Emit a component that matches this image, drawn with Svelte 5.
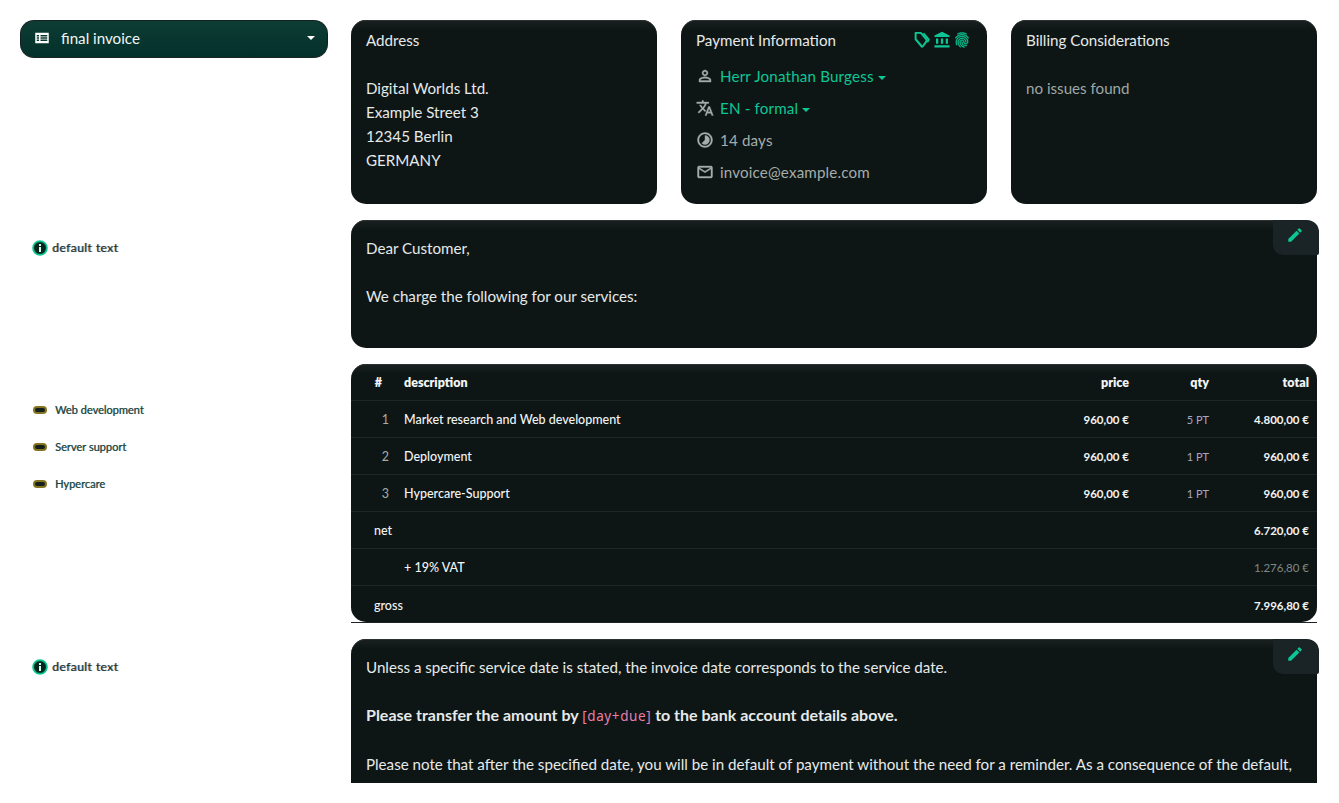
<script>
	const rows = [
		{ n: 1, label: 'Market research and Web development', price: '960,00 €', qty: '5 PT', total: '4.800,00 €' },
		{ n: 2, label: 'Deployment', price: '960,00 €', qty: '1 PT', total: '960,00 €' },
		{ n: 3, label: 'Hypercare-Support', price: '960,00 €', qty: '1 PT', total: '960,00 €' }
	]
	const sections = ['Web development', 'Server support', 'Hypercare']
	const pencil = 'M3 17.25V21h3.75L17.81 9.94l-3.75-3.75L3 17.25zM20.71 7.04a1 1 0 000-1.41l-2.34-2.34a1 1 0 00-1.41 0l-1.83 1.83 3.75 3.75 1.83-1.83z'
</script>

<div class="page">
	<div class="row">
		<aside class="side">
			<button class="doctype">
				<svg viewBox="0 0 24 24" width="18" height="18"><path fill="#fff" fill-rule="evenodd" d="M3 5h18v14H3z M5 8v2h3V8z M10 8v2h9V8z M5 11v2h3v-2z M10 11v2h9v-2z M5 14v2h3v-2z M10 14v2h9v-2z" /></svg>
				<span>final invoice</span>
				<i class="caret white"></i>
			</button>
		</aside>
		<div class="cards">
			<section class="card info">
				<div>Address</div>
				<div class="address">
					Digital Worlds Ltd.<br />Example Street 3<br />12345 Berlin<br />GERMANY
				</div>
			</section>
			<section class="card info">
				<div class="card-head">
					<span>Payment Information</span>
					<span class="head-icons">
						<svg viewBox="0 0 24 24" width="18" height="18" fill="none" stroke="#0cc795" stroke-width="2.6" stroke-linejoin="round"><path d="M3.500 2.500h7l7.500 9v2L13.500 20 12 21 3.500 11z" /><path d="M14 3l7 8.500-2 3.500" /></svg>
						<svg viewBox="0 0 24 24" width="18" height="18" fill="#0cc795"><path d="M4 10h3v7H4zm6.500 0h3v7h-3zM2 19h20v3H2zm15-9h3v7h-3zm-5-9L2 6v2h20V6z" /></svg>
						<svg viewBox="0 0 24 24" width="18" height="18" fill="#0cc795" stroke="#0cc795" stroke-width="0.6"><path d="M17.810 4.470c-.08 0-.16-.02-.23-.06C15.660 3.420 14 3 12.010 3c-1.980 0-3.860.47-5.570 1.410-.24.13-.54.04-.68-.2-.13-.24-.04-.55.2-.68C7.820 2.520 9.860 2 12.010 2c2.130 0 3.990.47 6.030 1.520.25.13.34.43.21.67-.09.18-.26.28-.44.28zM3.500 9.720c-.1 0-.2-.03-.29-.09-.23-.16-.28-.47-.12-.7.99-1.400 2.250-2.500 3.750-3.270C9.980 4.040 14 4.030 17.150 5.650c1.500.77 2.760 1.860 3.750 3.250.16.22.11.54-.12.7-.23.16-.54.11-.7-.12-.9-1.260-2.040-2.250-3.390-2.940-2.870-1.470-6.540-1.470-9.400.01-1.360.7-2.500 1.700-3.400 2.960-.08.14-.23.21-.39.21zm6.250 12.070c-.13 0-.26-.05-.35-.15-.87-.87-1.340-1.430-2.010-2.640-.69-1.230-1.050-2.730-1.050-4.340 0-2.970 2.540-5.390 5.660-5.390s5.660 2.420 5.660 5.390c0 .28-.22.5-.5.5s-.5-.22-.5-.5c0-2.420-2.090-4.390-4.660-4.390-2.570 0-4.660 1.970-4.660 4.390 0 1.440.32 2.770.93 3.850.64 1.150 1.080 1.640 1.850 2.420.19.2.19.51 0 .71-.11.1-.24.15-.37.15zm7.170-1.850c-1.190 0-2.240-.3-3.100-.89-1.490-1.010-2.380-2.650-2.380-4.390 0-.28.22-.5.5-.5s.5.22.5.5c0 1.410.72 2.740 1.940 3.560.71.48 1.540.71 2.540.71.24 0 .64-.03 1.040-.1.27-.05.53.13.58.41.05.27-.13.53-.41.58-.57.11-1.070.12-1.210.12zM14.910 22c-.04 0-.09-.01-.13-.02-1.590-.44-2.630-1.030-3.720-2.100-1.400-1.390-2.170-3.240-2.170-5.220 0-1.620 1.380-2.940 3.080-2.940 1.700 0 3.080 1.320 3.080 2.940 0 1.070.93 1.940 2.080 1.940s2.080-.87 2.080-1.940c0-3.770-3.250-6.830-7.250-6.830-2.840 0-5.440 1.580-6.610 4.030-.39.81-.59 1.760-.59 2.800 0 .78.07 2.010.67 3.610.1.26-.03.55-.29.64-.26.1-.55-.04-.64-.29-.49-1.310-.73-2.610-.73-3.960 0-1.200.23-2.290.68-3.240 1.330-2.790 4.280-4.600 7.510-4.600 4.550 0 8.250 3.510 8.250 7.830 0 1.620-1.380 2.940-3.080 2.940s-3.080-1.320-3.080-2.940c0-1.070-.93-1.940-2.080-1.940s-2.080.87-2.080 1.940c0 1.710.66 3.310 1.870 4.510.95.94 1.860 1.460 3.270 1.850.27.07.42.35.35.61-.05.23-.26.38-.47.38z" /></svg>
					</span>
				</div>
				<ul class="facts">
					<li>
						<svg viewBox="0 0 24 24" width="18" height="18"><path d="M12 5.900a2.100 2.100 0 110 4.200 2.100 2.100 0 010-4.200m0 9c2.970 0 6.100 1.460 6.100 2.100v1.100H5.900V17c0-.64 3.130-2.100 6.100-2.100M12 4C9.790 4 8 5.790 8 8s1.790 4 4 4 4-1.790 4-4-1.790-4-4-4zm0 9c-2.670 0-8 1.340-8 4v3h16v-3c0-2.660-5.330-4-8-4z" /></svg>
						<span class="link">Herr Jonathan Burgess<i class="caret"></i></span>
					</li>
					<li>
						<svg viewBox="0 0 24 24" width="18" height="18"><path d="M12.870 15.070l-2.540-2.510.03-.03A17.500 17.500 0 0014.070 6H17V4h-7V2H8v2H1v2h11.170C11.500 7.920 10.440 9.750 9 11.350 8.070 10.320 7.300 9.190 6.690 8h-2c.73 1.630 1.730 3.170 2.980 4.560l-5.090 5.020L4 19l5-5 3.110 3.110.76-2.040zM18.500 10h-2L12 22h2l1.120-3h4.750L21 22h2l-4.500-12zm-2.620 7l1.620-4.330L19.120 17h-3.240z" /></svg>
						<span class="link">EN - formal<i class="caret"></i></span>
					</li>
					<li>
						<svg viewBox="0 0 24 24" width="18" height="18"><path d="M16.240 7.760C15.070 6.590 13.540 6 12 6v6l-4.240 4.240c2.340 2.340 6.140 2.340 8.490 0 2.340-2.340 2.340-6.140-.01-8.480zM12 2C6.480 2 2 6.480 2 12s4.480 10 10 10 10-4.480 10-10S17.520 2 12 2zm0 18c-4.420 0-8-3.580-8-8s3.580-8 8-8 8 3.580 8 8-3.580 8-8 8z" /></svg>
						<span>14 days</span>
					</li>
					<li>
						<svg viewBox="0 0 24 24" width="18" height="18"><path d="M22 6c0-1.100-.9-2-2-2H4c-1.100 0-2 .9-2 2v12c0 1.100.9 2 2 2h16c1.100 0 2-.9 2-2V6zm-2 0l-8 5-8-5h16zm0 12H4V8l8 5 8-5v10z" /></svg>
						<span>invoice@example.com</span>
					</li>
				</ul>
			</section>
			<section class="card info">
				<div>Billing Considerations</div>
				<div class="address muted">no issues found</div>
			</section>
		</div>
	</div>

	<div class="row">
		<aside class="side">
			<div class="note">
				<svg viewBox="0 0 16 16" width="16" height="16"><circle cx="8" cy="8" r="7" fill="#063" stroke="#0cc795" stroke-width="1.6" /><circle cx="8" cy="8" r="5.5" fill="#08221d" /><path fill="#cfe" d="M7 7h2v5H7z M7 4h2v2H7z" /></svg>
				<span>default text</span>
			</div>
		</aside>
		<section class="card text short">
			<button class="edit" aria-label="edit">
				<svg viewBox="0 0 24 24" width="18" height="18"><path fill="#0cc795" d={pencil} /></svg>
			</button>
			<p>Dear Customer,</p>
			<p>We charge the following for our services:</p>
		</section>
	</div>

	<div class="row">
		<aside class="side">
			<ul class="sections">
				{#each sections as name}
					<li>
						<i class="pill"></i>
						<span>{name}</span>
					</li>
				{/each}
			</ul>
		</aside>
		<div class="table-wrap">
			<section class="card table">
				<div class="tr head">
					<span class="num">#</span>
					<span class="desc">description</span>
					<span class="price">price</span>
					<span class="qty">qty</span>
					<span class="total">total</span>
				</div>
				{#each rows as row}
					<div class="tr">
						<span class="num index">{row.n}</span>
						<span class="desc">{row.label}</span>
						<span class="price amount">{row.price}</span>
						<span class="qty unit">{row.qty}</span>
						<span class="total amount">{row.total}</span>
					</div>
				{/each}
				<div class="tr">
					<span class="sum">net</span>
					<span class="total amount">6.720,00 €</span>
				</div>
				<div class="tr">
					<span class="sum vat">+ 19% VAT</span>
					<span class="total amount dim">1.276,80 €</span>
				</div>
				<div class="tr">
					<span class="sum">gross</span>
					<span class="total amount">7.996,80 €</span>
				</div>
			</section>
		</div>
	</div>

	<div class="row">
		<aside class="side">
			<div class="note">
				<svg viewBox="0 0 16 16" width="16" height="16"><circle cx="8" cy="8" r="7" fill="#063" stroke="#0cc795" stroke-width="1.6" /><circle cx="8" cy="8" r="5.5" fill="#08221d" /><path fill="#cfe" d="M7 7h2v5H7z M7 4h2v2H7z" /></svg>
				<span>default text</span>
			</div>
		</aside>
		<section class="card text">
			<button class="edit" aria-label="edit">
				<svg viewBox="0 0 24 24" width="18" height="18"><path fill="#0cc795" d={pencil} /></svg>
			</button>
			<p>Unless a specific service date is stated, the invoice date corresponds to the service date.</p>
			<p><b>Please transfer the amount by <span class="token">[day+due]</span> to the bank account details above.</b></p>
			<p>Please note that after the specified date, you will be in default of payment without the need for a reminder. As a consequence of the default,<br />you are liable for any interest on arrears and reminder fees, including legal costs. This may also be passed on to third parties for collection.</p>
		</section>
	</div>
</div>

<style>
	:global(body) {
		background: #fff;
	}

	.page {
		height: 783px;
		overflow: hidden;
		box-sizing: border-box;
		padding: 20px 22px 0 20px;
		display: flex;
		flex-direction: column;
		gap: 16px;
		font-family: 'Lato', sans-serif;
		font-size: 15.15px;
		line-height: 24px;
		color: #e6eaea;
	}

	.row {
		display: grid;
		grid-template-columns: 308px 966px;
		column-gap: 23px;
		align-items: start;
	}

	.doctype {
		width: 100%;
		height: 38px;
		display: flex;
		align-items: center;
		gap: 10px;
		padding: 0 12px 3px;
		border: 1px solid #14201e;
		border-bottom-color: #1d2624;
		border-radius: 14px;
		background: linear-gradient(#0d3d34, #04302a);
		color: #f1f5f4;
		font: inherit;
	}

	.doctype span {
		flex: 1;
		text-align: left;
	}

	.caret {
		display: inline-block;
		margin-left: 4px;
		vertical-align: middle;
		border: 4px solid transparent;
		border-top-color: #0cc795;
		border-bottom: 0;
	}

	.caret.white {
		border-top-color: #fff;
	}

	.cards {
		display: grid;
		grid-template-columns: repeat(3, 306px);
		column-gap: 24px;
	}

	.card {
		position: relative;
		box-sizing: border-box;
		border-radius: 15px;
		background: linear-gradient(#1a2020, #0e1615 10px, #0e1615);
		box-shadow: inset 0 1px 0 #2b3130;
	}

	.info {
		height: 184px;
		padding: 8px 15px;
	}

	.address {
		margin-top: 24px;
	}

	.muted {
		color: #9ea8a6;
	}

	.card-head {
		display: flex;
		justify-content: space-between;
		align-items: center;
	}

	.head-icons {
		display: flex;
		gap: 2px;
		margin-right: 1px;
	}

	.facts {
		list-style: none;
		margin: 8px 0 0;
		padding: 0;
		letter-spacing: 0.17px;
	}

	.facts li {
		height: 32px;
		display: flex;
		align-items: center;
		gap: 6px;
		color: #a4adab;
	}

	.facts svg {
		fill: #a4adab;
		stroke: #a4adab;
		stroke-width: 0.5;
		flex: none;
	}

	.link {
		color: #0cc795;
	}

	.text {
		padding: 16px 15px;
		min-height: 128px;
	}

	.text p {
		margin: 0 0 24px;
	}

	.text b {
		font-size: 16px;
	}

	.short {
		height: 128px;
	}

	.token {
		color: #e87fb0;
		font-family: 'Noto Sans', sans-serif;
		font-weight: 400;
		font-size: 13.5px;
		letter-spacing: 0.6px;
	}

	.edit {
		position: absolute;
		top: 0;
		right: -2px;
		width: 46px;
		height: 35px;
		display: flex;
		align-items: center;
		justify-content: center;
		padding: 0 2px 5px 0;
		border: 0;
		border-radius: 0 12px 2px 10px;
		background: #1a2325;
	}

	.note {
		margin: 20px 0 0 12px;
		display: flex;
		align-items: center;
		gap: 4px;
		height: 16px;
		font-size: 12px;
		letter-spacing: 0.45px;
		color: #16312d;
		text-shadow: 1px 0 0 rgba(20, 60, 90, 0.6);
	}

	.sections {
		list-style: none;
		margin: 27px 0 0 13px;
		padding: 0;
		font-size: 11px;
		color: #1f4a44;
		text-shadow: 0.5px 0 0 rgba(20, 60, 60, 0.7);
	}

	.sections li {
		height: 37px;
		display: flex;
		align-items: center;
		gap: 8px;
	}

	.pill {
		width: 10px;
		height: 4px;
		border: 2px solid #85741f;
		border-radius: 4px;
		background: #14201e;
	}

	.table-wrap {
		height: 259px;
		box-sizing: border-box;
		border-bottom: 1px solid #1e2424;
	}

	.table {
		height: 258px;
		overflow: hidden;
		font-size: 12.5px;
		font-weight: 500;
	}

	.tr {
		height: 37px;
		display: flex;
		align-items: center;
		padding: 2px 8px 0 0;
		border-bottom: 1px solid #1f2726;
		box-sizing: border-box;
		color: #f2f5f5;
	}

	.tr:last-child {
		border-bottom: 0;
	}

	.head {
		font-weight: 800;
	}

	.num {
		width: 38px;
		text-align: right;
	}

	.head .num {
		width: 31px;
	}

	.index {
		color: #a4adab;
		font-weight: 400;
	}

	.desc {
		flex: 1;
		padding-left: 15px;
	}

	.head .desc {
		padding-left: 22px;
	}

	.price {
		width: 100px;
		text-align: right;
	}

	.qty {
		width: 80px;
		text-align: right;
	}

	.unit {
		color: #a9a6c4;
		font-size: 11px;
		font-weight: 400;
	}

	.total {
		width: 100px;
		text-align: right;
	}

	.amount {
		font-size: 11.5px;
		font-weight: 700;
	}

	.sum {
		flex: 1;
		padding-left: 23px;
	}

	.vat {
		padding-left: 53px;
	}

	.dim {
		color: #7e8886;
		font-weight: 400;
	}
</style>
